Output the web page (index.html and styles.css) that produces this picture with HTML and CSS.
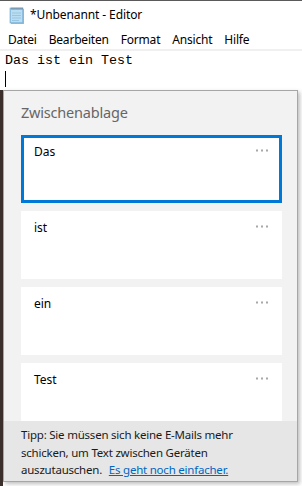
FILE: index.html
```html
<!DOCTYPE html>
<html lang="de">
<head>
  <meta charset="UTF-8" />
  <meta name="viewport" content="width=device-width, initial-scale=1.0" />
  <title>*Unbenannt - Editor</title>
  <link rel="stylesheet" href="styles.css">
</head>
<body>

  <div class="titlebar">
    <svg class="app-icon" width="16" height="17" viewBox="0 0 16 17">
      <rect x="2" y="2" width="13" height="15" fill="#d8b860" />
      <rect x="1" y="1" width="13" height="15" fill="#9cc9e6" stroke="#6fa3c8" stroke-width="0.6" />
      <rect x="2" y="3" width="11" height="12" fill="#b9ddf2" />
      <line x1="3" y1="6" x2="12" y2="6" stroke="#8cbad8" stroke-width="0.7" />
      <line x1="3" y1="8.5" x2="12" y2="8.5" stroke="#8cbad8" stroke-width="0.7" />
      <line x1="3" y1="11" x2="12" y2="11" stroke="#8cbad8" stroke-width="0.7" />
      <line x1="3" y1="13.5" x2="10" y2="13.5" stroke="#8cbad8" stroke-width="0.7" />
      <path d="M3 0.5v2M5 0.5v2M7 0.5v2M9 0.5v2M11 0.5v2M13 0.5v2" stroke="#5a6a78" stroke-width="0.8" />
    </svg>
    <span class="title">*Unbenannt - Editor</span>
  </div>

  <div class="menubar">
    <span class="menu-item">Datei</span>
    <span class="menu-item">Bearbeiten</span>
    <span class="menu-item">Format</span>
    <span class="menu-item">Ansicht</span>
    <span class="menu-item">Hilfe</span>
  </div>

  <div class="editor">
    <div class="editor-line">Das ist ein Test</div>
    <div class="caret"></div>
  </div>

  <div class="desktop-edge"></div>

  <div class="clipboard">
    <div class="clipboard-head">Zwischenablage</div>

    <div class="clip-list">
      <div class="clip selected">
        <span class="clip-text">Das</span>
        <svg class="clip-more" width="13" height="3" viewBox="0 0 13 3"><rect x="0" y="0.5" width="2" height="2" /><rect x="5" y="0.5" width="2" height="2" /><rect x="10" y="0.5" width="2" height="2" /></svg>
      </div>
      <div class="clip">
        <span class="clip-text">ist</span>
        <svg class="clip-more" width="13" height="3" viewBox="0 0 13 3"><rect x="0" y="0.5" width="2" height="2" /><rect x="5" y="0.5" width="2" height="2" /><rect x="10" y="0.5" width="2" height="2" /></svg>
      </div>
      <div class="clip">
        <span class="clip-text">ein</span>
        <svg class="clip-more" width="13" height="3" viewBox="0 0 13 3"><rect x="0" y="0.5" width="2" height="2" /><rect x="5" y="0.5" width="2" height="2" /><rect x="10" y="0.5" width="2" height="2" /></svg>
      </div>
      <div class="clip">
        <span class="clip-text">Test</span>
        <svg class="clip-more" width="13" height="3" viewBox="0 0 13 3"><rect x="0" y="0.5" width="2" height="2" /><rect x="5" y="0.5" width="2" height="2" /><rect x="10" y="0.5" width="2" height="2" /></svg>
      </div>
    </div>

    <div class="clipboard-tip">
      <div>Tipp: Sie müssen sich keine E-Mails mehr</div>
      <div>schicken, um Text zwischen Geräten</div>
      <div>auszutauschen. <a href="#">Es geht noch einfacher.</a></div>
    </div>
  </div>

</body>
</html>
```

FILE: styles.css
```css
body {
  margin: 0;
  width: 302px;
  height: 486px;
  overflow: hidden;
  position: relative;
  background-color: white;
  font-family: "Noto Sans", "Open Sans", sans-serif;
  font-size: 12px;
  color: #000;
}

/* Fensterleiste */
.titlebar {
  height: 29px;
  border-top: 1px solid #5a5a5a;
  display: flex;
  align-items: center;
  padding-left: 9px;
}

.app-icon {
  margin-right: 5px;
  margin-top: -1px;
}

.title {
  font-size: 12px;
  margin-top: -2px;
  letter-spacing: -0.1px;
}

.menubar {
  height: 19px;
  display: flex;
  align-items: center;
  padding-left: 8px;
  border-bottom: 2px solid #f0f0f0;
}

.menu-item {
  margin-right: 12px;
  font-size: 12px;
  letter-spacing: -0.2px;
}

.editor {
  height: 39px;
  padding: 2px 5px 0;
}

.editor-line {
  font-family: "Liberation Mono", "DejaVu Sans Mono", monospace;
  font-size: 13.33px;
  line-height: 16px;
}

.caret {
  width: 1px;
  height: 16px;
  margin-top: 2px;
  background-color: black;
}

.desktop-edge {
  position: absolute;
  left: 0;
  top: 90px;
  width: 3px;
  height: 396px;
  background-color: #3b302b;
}

/* Zwischenablage */
.clipboard {
  position: absolute;
  left: 3px;
  top: 90px;
  width: 293px;
  height: 390px;
  border: 1px solid #a6a6a6;
  background-color: #f2f2f2;
  box-shadow: 2px 2px 4px rgba(0, 0, 0, 0.25);
  display: flex;
  flex-direction: column;
}

.clipboard-head {
  padding: 10px 0 0 17px;
  height: 34px;
  font-size: 14.5px;
  letter-spacing: -0.2px;
  line-height: 22px;
  color: #666;
}

.clip-list {
  flex: 1;
  overflow: hidden;
  padding: 0 15px 0 17px;
}

.clip {
  box-sizing: border-box;
  height: 68px;
  margin-bottom: 8px;
  padding: 9px 13px;
  background-color: white;
  display: flex;
  justify-content: space-between;
  align-items: flex-start;
}

.clip.selected {
  border: 3px solid #0078d7;
  padding: 6px 10px;
}

.clip-text {
  line-height: 16px;
  font-size: 12px;
}

.clip-more {
  fill: #a8a8a8;
  margin-top: 5px;
}

.clipboard-tip {
  height: 60px;
  box-sizing: border-box;
  padding: 5px 10px 0 17px;
  background-color: #e6e6e6;
  font-size: 11.5px;
  letter-spacing: -0.22px;
  line-height: 17.5px;
  color: #1a1a1a;
}

.clipboard-tip a {
  margin-left: 4px;
  color: #0067c0;
}
```
